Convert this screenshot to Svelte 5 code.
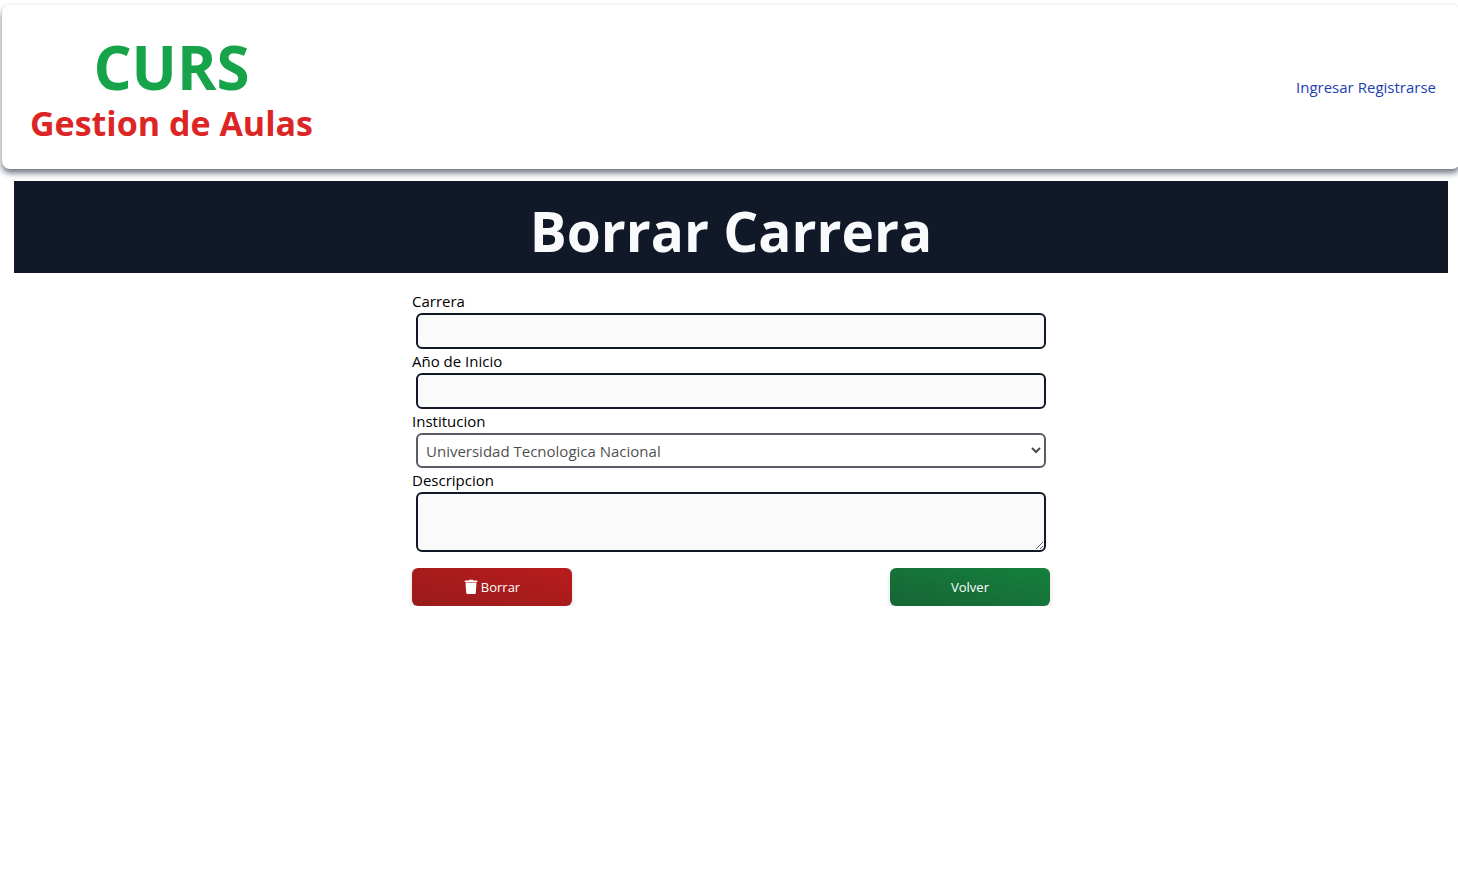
<script>
  let carrera = $state('');
  let inicio = $state('');
  let descripcion = $state('');
</script>

<header>
  <div class="brand">
    <p class="name">CURS</p>
    <p class="tagline">Gestion de Aulas</p>
  </div>
  <nav>
    <a href="#ingresar">Ingresar</a>
    <a href="#registrarse">Registrarse</a>
  </nav>
</header>

<main>
  <h1>Borrar Carrera</h1>
  <form onsubmit={(e) => e.preventDefault()}>
    <label for="carrera">Carrera</label>
    <input id="carrera" type="text" bind:value={carrera} />
    <label for="inicio">Año de Inicio</label>
    <input id="inicio" type="text" bind:value={inicio} />
    <label for="institucion">Institucion</label>
    <select id="institucion" disabled>
      <option>Universidad Tecnologica Nacional</option>
    </select>
    <label for="descripcion">Descripcion</label>
    <textarea id="descripcion" rows="2" bind:value={descripcion}></textarea>
    <div class="actions">
      <button class="danger" type="submit">
        <svg viewBox="0 0 14 16" width="14" height="16" aria-hidden="true">
          <path fill="currentColor" d="M1.4 1.5h3.2l.5-.8h3.8l.5.8h3.2c.5 0 .8.3.8.7v.8H.6v-.8c0-.4.3-.7.8-.7zM1.5 3.5h11l-.7 10.3c-.1.8-.5 1.2-1.2 1.2H3.4c-.7 0-1.1-.4-1.2-1.2z" />
        </svg>
        Borrar
      </button>
      <button class="back" type="button">Volver</button>
    </div>
  </form>
</main>

<style>
  :global(body) {
    margin: 0;
    background: #fff;
    overflow-x: hidden;
    font-family: 'Segoe UI', 'Open Sans', 'Noto Sans', sans-serif;
    font-size: 15px;
    line-height: 24px;
    color: #000;
  }

  header {
    display: flex;
    align-items: center;
    justify-content: space-between;
    margin: 5px -2px 12px 2px;
    padding: 28px 24px 24px 28px;
    border-radius: 8px;
    background: #fff;
    box-shadow: 0 4px 6px #6b7280;
  }

  .brand {
    font-weight: 700;
    text-align: center;
  }

  p {
    margin: 0;
  }

  .name {
    font-size: 60px;
    line-height: 68px;
    color: #16a34a;
  }

  .tagline {
    font-size: 34px;
    line-height: 44px;
    color: #dc2626;
  }

  nav {
    display: flex;
    gap: 4px;
    padding-bottom: 4px;
  }

  a {
    color: #1e40af;
    text-decoration: none;
  }

  main {
    margin: 0 10px 0 14px;
  }

  h1 {
    margin: 0 0 16px;
    padding: 20px 0 12px;
    background: #111827;
    color: #f9fafb;
    font-size: 55px;
    font-weight: 700;
    line-height: 60px;
    text-align: center;
  }

  form {
    display: flex;
    flex-direction: column;
    max-width: 638px;
    margin: 0 auto;
  }

  input,
  select,
  textarea {
    box-sizing: border-box;
    margin: 0 4px;
    border: 2px solid #111827;
    border-radius: 6px;
    background: #fafafa;
    font: inherit;
  }

  input {
    height: 36px;
    padding: 4px 8px;
  }

  select {
    height: 35px;
    padding: 4px;
    background: #fff;
    color: #000;
    opacity: 0.7;
  }

  textarea {
    height: 60px;
    padding: 4px 8px;
    resize: both;
  }

  .actions {
    display: flex;
    justify-content: space-between;
    margin-top: 16px;
  }

  button {
    display: flex;
    align-items: center;
    justify-content: center;
    gap: 3px;
    width: 160px;
    height: 38px;
    padding: 0;
    border: 0;
    border-radius: 6px;
    color: #fff;
    font: inherit;
    font-size: 13px;
    box-shadow: 0 4px 6px -1px rgb(0 0 0 / 0.15), 0 2px 4px -2px rgb(0 0 0 / 0.15);
  }

  .danger {
    background: linear-gradient(to top right, #991b1b, #b91c1c);
  }

  .back {
    background: linear-gradient(to top right, #166534, #15803d);
  }
</style>
